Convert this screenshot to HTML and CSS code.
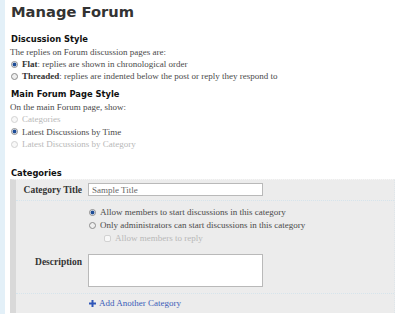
FILE: index.html
```html
<!DOCTYPE html>
<html lang="en">
<head>
  <meta charset="UTF-8" />
  <title>Manage Forum</title>
  <link rel="stylesheet" href="styles.css">
</head>
<body>
  <div class="page">
    <h1>Manage Forum</h1>

    <div class="group">
      <h2>Discussion Style</h2>
      <p class="hint">The replies on Forum discussion pages are:</p>
      <label class="opt"><input type="radio" name="style" checked><b>Flat</b>: replies are shown in chronological order</label>
      <label class="opt"><input type="radio" name="style"><b>Threaded</b>: replies are indented below the post or reply they respond to</label>
    </div>

    <div class="group">
      <h2>Main Forum Page Style</h2>
      <p class="hint">On the main Forum page, show:</p>
      <label class="opt off"><input type="radio" name="main" disabled>Categories</label>
      <label class="opt"><input type="radio" name="main" checked>Latest Discussions by Time</label>
      <label class="opt off"><input type="radio" name="main" disabled>Latest Discussions by Category</label>
    </div>

    <h2 class="cat-head">Categories</h2>
    <div class="panel">
      <div class="row row-title">
        <label class="field-label">Category Title</label>
        <div><input class="text" type="text" value="Sample Title"></div>
      </div>

      <div class="row row-body">
        <span></span>
        <div class="perms">
          <label class="opt"><input type="radio" name="perm" checked>Allow members to start discussions in this category</label>
          <label class="opt"><input type="radio" name="perm">Only administrators can start discussions in this category</label>
          <label class="opt off sub"><input type="checkbox" disabled>Allow members to reply</label>
        </div>
        <label class="field-label desc-label">Description</label>
        <textarea class="area"></textarea>
      </div>

      <div class="row row-add">
        <span></span>
        <a href="#" class="add-link">
          <svg width="7" height="7" viewBox="0 0 7 7"><path d="M3.5 0v7M0 3.5h7" stroke="#2f56b8" stroke-width="2"/></svg>
          Add Another Category
        </a>
      </div>
    </div>
  </div>
</body>
</html>
```

FILE: styles.css
```css
* {
  box-sizing: border-box;
  margin: 0;
  padding: 0;
}

body {
  background: #fff;
  font-family: "Liberation Serif", serif;
  font-size: 9px;
  color: #4a4a4a;
}

.page {
  border-left: 5px solid #e3f0f8;
  padding: 3px 5px 0 5px;
  min-height: 314px;
}

h1 {
  font-family: "DejaVu Sans", sans-serif;
  font-size: 14.7px;
  font-weight: bold;
  color: #333;
  line-height: 18px;
  padding-left: 1px;
}

h2 {
  font-family: "DejaVu Sans", sans-serif;
  font-size: 8.35px;
  font-weight: bold;
  color: #111;
  line-height: 12px;
  padding-left: 1px;
}

.group {
  margin-top: 12px;
}

.group + .group {
  margin-top: 6px;
}

.hint {
  line-height: 12px;
  margin-top: 1px;
}

.opt {
  display: flex;
  align-items: center;
  line-height: 12px;
  white-space: nowrap;
}

.group + .group .opt {
  line-height: 12.5px;
}

.opt b {
  color: #333;
}

.opt.off {
  color: #b8b8b8;
}

input[type="radio"],
input[type="checkbox"] {
  appearance: none;
  width: 7px;
  height: 7px;
  border: 1px solid #8c8c8c;
  border-radius: 50%;
  background: #eee;
  margin: 0 4px 0 1px;
  flex: none;
}

input[type="radio"]:checked {
  background: radial-gradient(circle, #1d4c96 0 1.6px, #dfe7f2 2.2px);
}

input:disabled {
  border-color: #d2d2d2;
  background: #f8f8f8;
}

input[type="checkbox"] {
  border-radius: 2px;
}

.cat-head {
  margin-top: 16px;
}

.panel {
  background: #ececec;
  border-left: 6px solid #d9d9d9;
  border-right: 1px dotted #dfe6ea;
  border-top: 1px dotted #f6f6f6;
}

.row {
  display: grid;
  grid-template-columns: 66px 175px;
  column-gap: 6px;
  align-items: center;
  border-bottom: 1px dotted #d5e4ec;
}

.row-title {
  height: 21px;
}

.field-label {
  font-weight: bold;
  font-size: 9.5px;
  color: #333;
  text-align: right;
}

.text {
  display: block;
  width: 175px;
  height: 13px;
  border: 1px solid #b9b9b9;
  background: #fff;
  font-family: "Liberation Serif", serif;
  font-size: 9px;
  color: #666;
  padding: 0 3px;
  outline: none;
}

.row-body {
  padding: 5px 0 6px;
  align-items: start;
}

.perms .opt {
  line-height: 13px;
}

.opt.sub {
  padding-left: 15px;
}

.desc-label {
  margin-top: 12px;
}

.area {
  display: block;
  width: 175px;
  height: 33px;
  margin-top: 9px;
  border: 1px solid #b9b9b9;
  background: #fff;
  resize: none;
}

.row-add {
  height: 19px;
  border-bottom: none;
}

.add-link {
  display: flex;
  align-items: center;
  gap: 3px;
  color: #3b5cb8;
  text-decoration: none;
  padding-left: 1px;
}
```
